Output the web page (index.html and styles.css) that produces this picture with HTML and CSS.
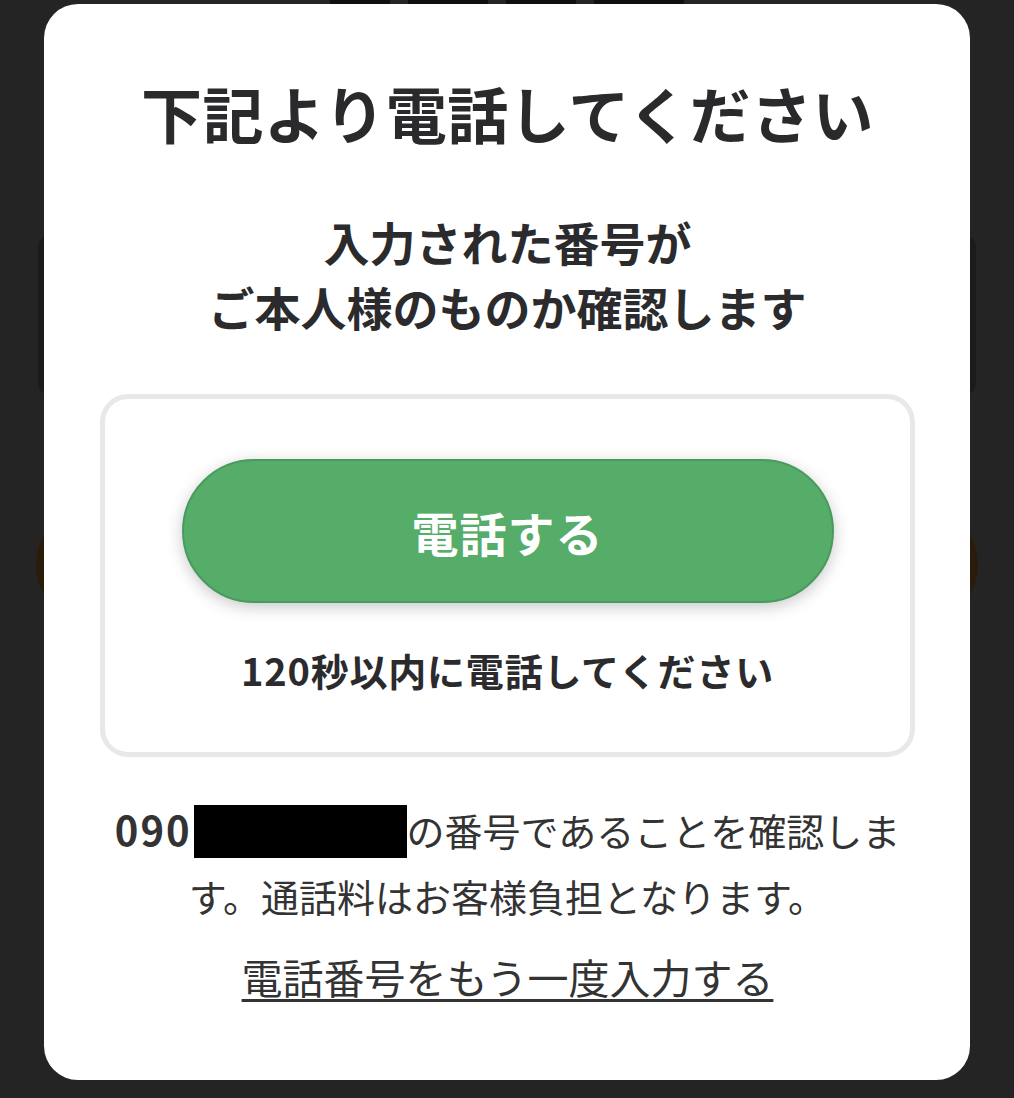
FILE: index.html
```html
<!DOCTYPE html>
<html lang="ja">
<head>
<meta charset="utf-8">
<title>電話認証</title>
<link rel="stylesheet" href="styles.css">
</head>
<body>
<div class="backdrop">
  <div class="bg-heading">
    <span class="bg-bar w1"></span><span class="bg-bar w2"></span><span class="bg-bar w3"></span><span class="bg-bar w4"></span>
  </div>
  <div class="bg-input"></div>
  <div class="bg-button"></div>
</div>
<div class="modal">
  <h1 class="title">下記より電話してください</h1>
  <p class="lead">入力された番号が<br>ご本人様のものか確認します</p>
  <div class="card">
    <button class="call-btn" type="button">電話する</button>
    <p class="limit">120秒以内に電話してください</p>
  </div>
  <p class="note"><span class="num">090</span><span class="mask"></span>の番号であることを確認します。通話料はお客様負担となります。</p>
  <a class="retry" href="#">電話番号をもう一度入力する</a>
</div>
</body>
</html>
```
FILE: styles.css
```css
html, body {
  margin: 0;
  padding: 0;
}
body {
  width: 1014px;
  height: 1098px;
  overflow: hidden;
  background: #242424;
  font-family: "Noto Sans CJK JP", "Noto Sans", sans-serif;
  position: relative;
}
.backdrop {
  display: flex;
  flex-direction: column;
  align-items: center;
  padding: 0 36px;
}
.bg-heading {
  display: flex;
  gap: 18px;
  height: 6px;
  align-items: flex-start;
}
.bg-bar {
  display: block;
  height: 6px;
  border-radius: 0 0 3px 3px;
  background: #0f0f0f;
}
.w1 { width: 60px; }
.w2 { width: 80px; }
.w3 { width: 70px; }
.w4 { width: 90px; }
.bg-input {
  margin-top: 229px;
  width: 938px;
  height: 160px;
  border-radius: 12px;
  background: #1b1b1b;
}
.bg-button {
  margin-top: 110px;
  width: 942px;
  height: 120px;
  border-radius: 60px;
  background: #2a1c0b;
}
.modal {
  position: absolute;
  left: 44px;
  top: 4px;
  width: 926px;
  height: 1076px;
  box-sizing: border-box;
  background: #ffffff;
  border-radius: 34px;
  padding: 72px 55px 0 56px;
  display: flex;
  flex-direction: column;
  align-items: center;
  color: #2b2b2d;
}
.title {
  margin: 0;
  font-size: 61px;
  line-height: 73px;
  font-weight: 700;
  letter-spacing: 0.5px;
  color: #2a2a2c;
}
.lead {
  margin: 60px 0 0;
  font-size: 46px;
  line-height: 65px;
  font-weight: 700;
  text-align: center;
  color: #2b2b2d;
}
.card {
  margin-top: 55px;
  width: 815px;
  box-sizing: border-box;
  border: 5px solid #e8e8e8;
  border-radius: 28px;
  padding: 60px 0 57px;
  display: flex;
  flex-direction: column;
  align-items: center;
}
.call-btn {
  width: 652px;
  height: 144px;
  border: 2px solid #4b9a5d;
  border-radius: 72px;
  background: #56ac69;
  color: #ffffff;
  font-family: inherit;
  font-size: 47px;
  font-weight: 700;
  letter-spacing: 1px;
  box-shadow: 0 4px 16px rgba(0, 0, 0, 0.22);
  cursor: pointer;
}
.limit {
  margin: 42px 0 0;
  font-size: 38px;
  line-height: 50px;
  font-weight: 700;
  letter-spacing: 0.8px;
  color: #2b2b2d;
}
.note {
  margin: 39px 0 0;
  width: 815px;
  font-size: 38px;
  line-height: 66px;
  text-align: center;
  color: #333333;
}
.num {
  font-weight: 700;
  font-size: 40px;
  letter-spacing: 2px;
}
.mask {
  display: inline-block;
  width: 213px;
  height: 53px;
  margin-left: 2px;
  background: #000000;
  vertical-align: -12px;
}
.retry {
  margin-top: 19px;
  font-size: 41px;
  line-height: 56px;
  color: #333333;
  text-decoration: underline;
  text-decoration-thickness: 3px;
  text-underline-offset: 5px;
}
```
